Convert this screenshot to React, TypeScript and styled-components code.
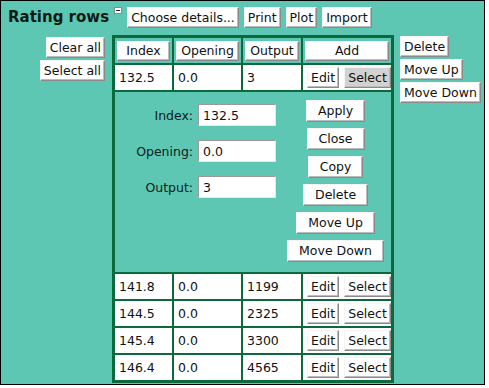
import React from 'react';
import styled, { createGlobalStyle, css } from 'styled-components';

const GlobalStyle = createGlobalStyle`
  html, body {
    margin: 0;
    padding: 0;
    background: #ffffff;
  }
  body {
    font-family: "DejaVu Sans", "Liberation Sans", sans-serif;
  }
`;

type RatingRow = {
  index: string;
  opening: string;
  output: string;
};

const rows: RatingRow[] = [
  { index: '132.5', opening: '0.0', output: '3' },
  { index: '141.8', opening: '0.0', output: '1199' },
  { index: '144.5', opening: '0.0', output: '2325' },
  { index: '145.4', opening: '0.0', output: '3300' },
  { index: '146.4', opening: '0.0', output: '4565' },
];

export default function App() {
  const [first, ...rest] = rows;
  return (
    <>
      <GlobalStyle />
      <Panel>
        <TopBar>
          <Title>Rating rows</Title>
          <Collapse />
          <Button>Choose details...</Button>
          <Button>Print</Button>
          <Button>Plot</Button>
          <Button>Import</Button>
        </TopBar>
        <Main>
          <SideColumn $align="right">
            <Button>Clear all</Button>
            <Button>Select all</Button>
          </SideColumn>
          <Grid>
            <tbody>
              <tr>
                <HeadCell $w={57}><Button $full>Index</Button></HeadCell>
                <HeadCell $w={67}><Button $full>Opening</Button></HeadCell>
                <HeadCell $w={58}><Button $full>Output</Button></HeadCell>
                <HeadCell $w={88}><Button $full>Add</Button></HeadCell>
              </tr>
              <DataRow row={first} selected />
              <tr>
                <EditCell colSpan={4}>
                  <EditForm>
                    <Fields>
                      <Field>
                        <Label>Index:</Label>
                        <Input defaultValue="132.5" />
                      </Field>
                      <Field>
                        <Label>Opening:</Label>
                        <Input defaultValue="0.0" />
                      </Field>
                      <Field>
                        <Label>Output:</Label>
                        <Input defaultValue="3" />
                      </Field>
                    </Fields>
                    <FormButtons>
                      <Button $wide>Apply</Button>
                      <Button $wide>Close</Button>
                      <Button $wide>Copy</Button>
                      <Button $wide>Delete</Button>
                      <Button $wide>Move Up</Button>
                      <Button $wide>Move Down</Button>
                    </FormButtons>
                  </EditForm>
                </EditCell>
              </tr>
              {rest.map((r) => (
                <DataRow key={r.index} row={r} />
              ))}
            </tbody>
          </Grid>
          <SideColumn $align="left">
            <Button>Delete</Button>
            <Button>Move Up</Button>
            <Button>Move Down</Button>
          </SideColumn>
        </Main>
      </Panel>
    </>
  );
}

const DataRow: React.FC<{ row: RatingRow; selected?: boolean }> = ({ row, selected }) => (
  <tr>
    <Cell>{row.index}</Cell>
    <Cell>{row.opening}</Cell>
    <Cell>{row.output}</Cell>
    <Cell>
      <Actions>
        <Button>Edit</Button>
        <Button $selected={selected}>Select</Button>
      </Actions>
    </Cell>
  </tr>
);

const Panel = styled.div`
  box-sizing: border-box;
  width: 485px;
  height: 385px;
  border: 1px solid #000;
  background: #5dc7b4;
  padding: 6px 0 0 7px;
  overflow: hidden;
  color: #111;
  font-size: 12.5px;
`;

const TopBar = styled.div`
  display: flex;
  align-items: flex-start;
  gap: 5px;
`;

const Title = styled.div`
  font-size: 15px;
  font-weight: bold;
  line-height: 21px;
  color: #0d1a14;
`;

const Collapse = styled.span`
  position: relative;
  box-sizing: border-box;
  width: 8px;
  height: 7px;
  background: #fff;
  border: 1px solid #8a8a8a;
  &::after {
    content: '';
    position: absolute;
    left: 1px;
    right: 1px;
    top: 2px;
    height: 1px;
    background: #222;
  }
`;

const Button = styled.button<{ $full?: boolean; $wide?: boolean; $selected?: boolean }>`
  box-sizing: border-box;
  height: 21px;
  margin: 0;
  padding: 0 ${(p) => (p.$wide ? 11 : 3)}px;
  font-family: "DejaVu Sans", "Liberation Sans", sans-serif;
  font-size: 12.5px;
  line-height: 18px;
  color: #111;
  background: ${(p) => (p.$selected ? '#d2d2d2' : '#ffffff')};
  border: 1px solid;
  border-color: #f4f4f4 #8a8a8a #8a8a8a #f4f4f4;
  box-shadow: inset -1px -1px 0 #bcbcbc;
  white-space: nowrap;
  ${(p) =>
    p.$full &&
    css`
      width: 100%;
      height: 20px;
    `}
  ${(p) =>
    p.$wide &&
    css`
      height: 22px;
    `}
`;

const Main = styled.div`
  display: flex;
  align-items: flex-start;
  margin-top: 7px;
`;

const SideColumn = styled.div<{ $align: 'left' | 'right' }>`
  display: flex;
  flex-direction: column;
  gap: 2px;
  ${(p) =>
    p.$align === 'right'
      ? css`
          width: 97px;
          align-items: flex-end;
          margin-right: 7px;
          padding-top: 2px;
        `
      : css`
          align-items: flex-start;
          margin-left: 6px;
          padding-top: 1px;
        `}
`;

const Grid = styled.table`
  border: 1px solid #0b6a3b;
  border-spacing: 2px;
  background: #0b6a3b;
  flex-shrink: 0;
`;

const HeadCell = styled.td<{ $w: number }>`
  box-sizing: border-box;
  width: ${(p) => p.$w}px;
  height: 25px;
  padding: 0 2px;
  background: #5dc7b4;
`;

const Cell = styled.td`
  box-sizing: border-box;
  height: 25px;
  padding: 0 0 0 4px;
  background: #fff;
  white-space: nowrap;
`;

const Actions = styled.div`
  display: flex;
  gap: 5px;
`;

const EditCell = styled.td`
  box-sizing: border-box;
  height: 180px;
  padding: 8px 7px 0 0;
  vertical-align: top;
  background: #5dc7b4;
`;

const EditForm = styled.div`
  display: flex;
  justify-content: flex-end;
  gap: 11px;
`;

const Fields = styled.div`
  display: flex;
  flex-direction: column;
  gap: 14px;
  padding-top: 4px;
`;

const Field = styled.div`
  display: flex;
  align-items: center;
  justify-content: flex-end;
  gap: 5px;
`;

const Label = styled.span`
  color: #10201a;
`;

const Input = styled.input`
  box-sizing: border-box;
  width: 78px;
  height: 22px;
  margin: 0;
  padding: 0 4px;
  font-family: "DejaVu Sans", "Liberation Sans", sans-serif;
  font-size: 12.5px;
  color: #111;
  background: #fff;
  border: 1px solid;
  border-color: #9a9a9a #e6e6e6 #e6e6e6 #9a9a9a;
  outline: none;
`;

const FormButtons = styled.div`
  display: flex;
  flex-direction: column;
  align-items: center;
  gap: 6px;
`;
